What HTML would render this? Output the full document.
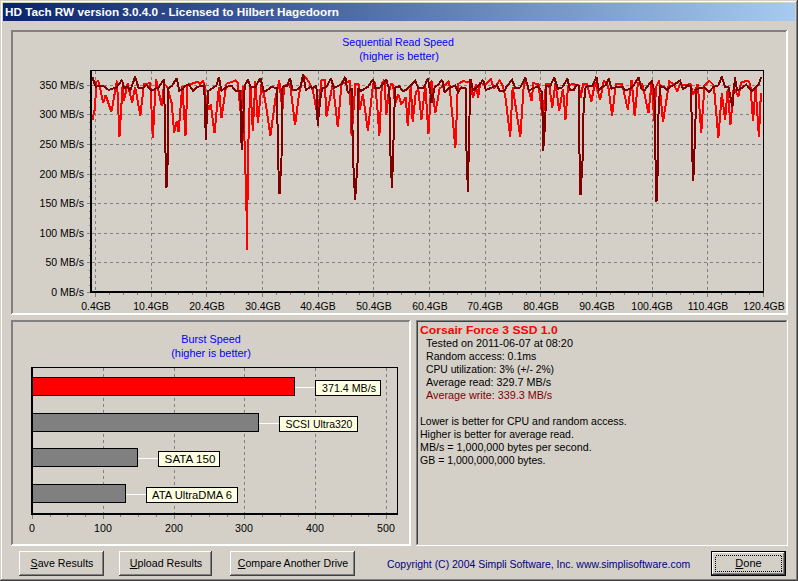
<!DOCTYPE html>
<html><head><meta charset="utf-8"><style>
html,body{margin:0;padding:0;}
body{width:798px;height:581px;background:#d4d0c8;position:relative;overflow:hidden;font-family:"Liberation Sans", sans-serif;}
.t{position:absolute;white-space:pre;line-height:13px;}
svg{position:absolute;left:0;top:0;}
u{text-decoration:underline;}
</style></head><body>
<div style="position:absolute;left:3px;top:3px;width:792px;height:18px;background:linear-gradient(to right,#0a246a,#a6caf0);"></div>
<svg width="798" height="581" viewBox="0 0 798 581" shape-rendering="crispEdges">
<rect x="0" y="0" width="798" height="1" fill="#d4d0c8"/>
<rect x="0" y="0" width="1" height="581" fill="#d4d0c8"/>
<rect x="1" y="1" width="796" height="1" fill="#ffffff"/>
<rect x="1" y="1" width="1" height="579" fill="#ffffff"/>
<rect x="0" y="580" width="798" height="1" fill="#404040"/>
<rect x="797" y="0" width="1" height="581" fill="#404040"/>
<rect x="1" y="579" width="796" height="1" fill="#808080"/>
<rect x="796" y="1" width="1" height="579" fill="#808080"/>
<rect x="11" y="30" width="776" height="1" fill="#808080"/>
<rect x="11" y="30" width="1" height="284" fill="#808080"/>
<rect x="11" y="314" width="777" height="1" fill="#ffffff"/>
<rect x="787" y="30" width="1" height="285" fill="#ffffff"/>
<rect x="12" y="31" width="774" height="1" fill="#808080"/>
<rect x="12" y="31" width="1" height="282" fill="#808080"/>
<rect x="12" y="313" width="775" height="1" fill="#ffffff"/>
<rect x="786" y="31" width="1" height="283" fill="#ffffff"/>
<rect x="11" y="320" width="399" height="1" fill="#808080"/>
<rect x="11" y="320" width="1" height="225" fill="#808080"/>
<rect x="11" y="545" width="400" height="1" fill="#ffffff"/>
<rect x="410" y="320" width="1" height="226" fill="#ffffff"/>
<rect x="12" y="321" width="397" height="1" fill="#808080"/>
<rect x="12" y="321" width="1" height="223" fill="#808080"/>
<rect x="12" y="544" width="398" height="1" fill="#ffffff"/>
<rect x="409" y="321" width="1" height="224" fill="#ffffff"/>
<rect x="416" y="320" width="372" height="1" fill="#808080"/>
<rect x="416" y="320" width="1" height="226" fill="#808080"/>
<rect x="416" y="545" width="372" height="1" fill="#ffffff"/>
<rect x="787" y="320" width="1" height="226" fill="#ffffff"/>
<rect x="417" y="321" width="370" height="1" fill="#404040"/>
<rect x="417" y="321" width="1" height="224" fill="#404040"/>
<rect x="417" y="544" width="370" height="1" fill="#d4d0c8"/>
<rect x="786" y="321" width="1" height="224" fill="#d4d0c8"/>
<path d="M95.5 71V291 M151.5 71V291 M206.5 71V291 M262.5 71V291 M318.5 71V291 M373.5 71V291 M429.5 71V291 M485.5 71V291 M540.5 71V291 M596.5 71V291 M652.5 71V291 M707.5 71V291 M92 262.5H763 M92 233.5H763 M92 203.5H763 M92 174.5H763 M92 144.5H763 M92 114.5H763 M92 85.5H763" stroke="#808080" stroke-width="1" stroke-dasharray="3 3" fill="none"/>
<rect x="90" y="70" width="674" height="1" fill="#000"/>
<rect x="90" y="70" width="2" height="223" fill="#000"/>
<rect x="763" y="70" width="1" height="223" fill="#000"/>
<rect x="90" y="291" width="674" height="2" fill="#000"/>
<path d="M87 292.5H90 M89 285.5H90 M89 277.5H90 M89 270.5H90 M87 262.5H90 M89 255.5H90 M89 248.5H90 M89 240.5H90 M87 233.5H90 M89 225.5H90 M89 218.5H90 M89 211.5H90 M87 203.5H90 M89 196.5H90 M89 188.5H90 M89 181.5H90 M87 174.5H90 M89 166.5H90 M89 159.5H90 M89 151.5H90 M87 144.5H90 M89 137.5H90 M89 129.5H90 M89 122.5H90 M87 114.5H90 M89 107.5H90 M89 100.5H90 M89 92.5H90 M87 85.5H90 M95.5 293V297 M109.5 293V295 M123.5 293V295 M137.5 293V295 M151.5 293V297 M165.5 293V295 M178.5 293V295 M192.5 293V295 M206.5 293V297 M220.5 293V295 M234.5 293V295 M248.5 293V295 M262.5 293V297 M276.5 293V295 M290.5 293V295 M304.5 293V295 M318.5 293V297 M332.5 293V295 M346.5 293V295 M359.5 293V295 M373.5 293V297 M387.5 293V295 M401.5 293V295 M415.5 293V295 M429.5 293V297 M443.5 293V295 M457.5 293V295 M471.5 293V295 M485.5 293V297 M499.5 293V295 M512.5 293V295 M526.5 293V295 M540.5 293V297 M554.5 293V295 M568.5 293V295 M582.5 293V295 M596.5 293V297 M610.5 293V295 M624.5 293V295 M638.5 293V295 M652.5 293V297 M666.5 293V295 M680.5 293V295 M693.5 293V295 M707.5 293V297 M721.5 293V295 M735.5 293V295 M749.5 293V295 M763.5 293V297" stroke="#808080" stroke-width="1" fill="none"/>
<path d="M92.5 120.1 L95.0 108.2 L96.3 81.8 L98.2 81.2 L100.1 88.1 L103.2 103.2 L105.7 95.0 L111.4 112.0 L117.0 80.6 L119.5 136.5 L122.7 84.3 L123.9 100.7 L127.7 83.7 L132.1 102.5 L135.2 86.8 L140.3 115.7 L144.0 84.3 L150.3 83.1 L152.8 137.7 L156.0 78.7 L161.6 105.7 L164.1 83.7 L167.3 86.8 L171.7 103.2 L174.2 132.7 L176.7 120.8 L178.6 132.1 L182.3 85.6 L185.5 135.8 L187.4 85.6 L190.0 84.3 L197.6 81.8 L200.1 84.3 L203.2 80.6 L204.5 85.0 L205.7 99.4 L208.9 109.5 L210.8 104.4 L214.5 133.3 L218.9 86.8 L221.4 118.3 L226.5 83.7 L235.3 80.6 L237.8 83.1 L240.9 114.5 L242.8 85.6 L246.2 196.0 L247.4 250.0 L247.6 167.0 L250.3 84.3 L252.8 130.8 L255.4 80.6 L257.9 123.3 L261.6 83.1 L265.4 101.9 L270.4 135.8 L275.5 98.2 L279.2 80.6 L282.4 110.7 L284.2 85.6 L290.1 84.3 L295.1 125.2 L298.8 95.6 L303.2 75.5 L306.4 78.1 L310.2 84.3 L312.7 90.0 L317.7 115.7 L321.5 79.9 L324.6 79.9 L326.5 116.4 L332.8 83.7 L337.8 127.0 L341.6 82.4 L345.3 83.7 L349.7 80.6 L351.6 135.8 L355.4 84.3 L358.5 83.7 L359.8 109.5 L362.9 94.4 L367.9 130.8 L373.0 84.3 L375.0 83.1 L377.5 109.5 L379.4 135.8 L381.9 83.1 L384.4 79.9 L386.3 114.5 L388.8 91.9 L391.3 83.1 L393.2 85.6 L395.1 104.4 L398.2 93.8 L401.4 104.4 L405.8 96.9 L407.7 125.8 L410.8 85.0 L412.7 122.0 L415.8 92.5 L418.3 89.4 L421.5 119.5 L425.3 85.0 L428.4 134.0 L431.5 80.6 L435.3 113.2 L439.7 88.1 L443.5 86.2 L449.1 81.2 L455.4 148.0 L457.9 84.3 L462.9 81.2 L470.5 82.4 L473.0 98.2 L474.9 90.6 L475.7 84.3 L478.2 97.5 L480.1 83.1 L485.7 84.3 L490.7 78.7 L493.9 88.7 L499.5 80.6 L502.7 85.6 L505.2 95.6 L510.2 137.1 L512.7 86.8 L520.3 137.1 L524.0 81.8 L527.2 84.3 L531.6 101.3 L533.4 83.1 L538.5 84.3 L540.4 100.7 L542.9 118.3 L546.0 83.7 L549.1 84.3 L552.3 108.2 L555.4 83.1 L559.2 110.7 L563.0 88.7 L565.5 119.5 L568.0 86.8 L571.9 83.7 L578.8 85.6 L580.7 97.5 L583.2 83.7 L587.0 84.3 L591.4 101.3 L595.2 81.8 L600.2 100.0 L603.9 80.6 L608.3 86.8 L612.1 115.7 L615.9 83.7 L622.2 84.3 L627.8 109.5 L631.6 79.9 L634.7 115.7 L637.9 83.1 L642.3 83.7 L648.5 113.2 L651.7 81.8 L654.2 120.8 L656.1 86.8 L659.2 80.6 L663.0 122.0 L667.3 94.6 L669.3 81.3 L673.3 83.9 L677.3 91.2 L679.9 83.9 L683.9 85.3 L690.5 83.9 L693.2 94.6 L697.8 83.9 L701.2 133.1 L704.5 85.3 L709.1 80.6 L713.8 85.3 L718.4 137.7 L721.8 93.2 L725.1 119.8 L727.7 89.2 L730.4 125.1 L733.7 87.9 L738.4 96.6 L741.0 82.6 L747.6 80.6 L750.3 83.9 L753.0 121.1 L755.6 87.9 L758.9 137.1 L760.9 93.2" stroke="#ff0000" stroke-width="2" fill="none" stroke-linejoin="miter" stroke-miterlimit="2"/>
<path d="M92.5 77.4 L95.7 86.8 L102.6 85.6 L108.8 90.0 L116.4 87.5 L122.0 79.9 L123.9 88.1 L127.7 86.8 L130.2 90.6 L135.2 76.8 L138.4 87.5 L142.8 88.1 L146.5 85.0 L151.6 90.6 L158.5 87.5 L164.1 79.3 L165.0 134.0 L166.5 188.0 L168.0 154.0 L168.5 88.1 L171.7 86.2 L176.7 78.1 L179.2 90.6 L183.0 88.7 L185.5 85.6 L188.8 84.3 L193.2 91.2 L196.9 86.8 L203.8 85.6 L205.1 101.9 L205.7 139.5 L208.2 91.2 L216.4 85.6 L218.9 76.8 L221.4 90.6 L226.5 86.8 L231.5 85.6 L235.3 90.6 L240.3 91.2 L241.7 150.2 L244.7 85.6 L247.8 79.9 L251.0 87.5 L255.4 86.8 L260.4 78.1 L263.5 90.6 L266.7 90.6 L271.7 86.8 L275.5 88.1 L277.0 88.0 L278.0 158.0 L279.5 194.0 L281.5 158.0 L282.5 88.0 L283.8 85.6 L286.9 86.2 L290.1 78.1 L292.6 90.0 L297.6 89.4 L300.7 86.2 L303.2 73.7 L305.8 90.0 L310.2 86.8 L312.7 88.1 L316.4 85.6 L317.7 125.8 L320.2 99.4 L322.1 88.7 L326.5 86.8 L330.9 78.7 L334.0 88.1 L341.6 84.3 L345.3 76.8 L347.8 93.1 L351.6 88.1 L353.2 161.8 L355.1 199.8 L357.6 161.8 L358.5 88.1 L360.4 91.2 L367.9 86.8 L373.0 79.3 L375.5 88.7 L379.9 87.5 L380.0 87.5 L386.3 79.9 L389.4 90.0 L390.5 155.7 L392.0 188.2 L393.6 137.8 L395.1 87.5 L399.5 86.2 L402.6 91.2 L405.8 90.0 L410.2 86.2 L415.2 80.6 L418.3 88.1 L424.0 87.5 L427.8 78.1 L430.3 91.9 L431.5 103.2 L434.7 86.8 L437.8 85.0 L442.2 79.9 L444.7 92.5 L449.1 88.1 L455.4 85.6 L457.9 91.9 L461.7 87.5 L465.5 88.1 L466.6 156.9 L468.0 192.0 L469.0 135.0 L470.5 78.7 L473.0 90.6 L473.0 90.6 L477.5 86.8 L483.2 79.9 L485.7 90.0 L490.7 88.1 L497.0 85.0 L499.5 90.6 L504.5 91.2 L506.4 86.8 L512.1 79.9 L515.2 88.1 L520.3 87.5 L525.3 77.4 L529.0 90.6 L534.1 88.1 L537.8 86.2 L542.2 92.5 L543.2 151.0 L545.4 118.3 L546.0 85.6 L550.4 85.6 L554.2 77.4 L557.9 88.7 L562.3 87.5 L567.4 78.7 L570.0 90.0 L573.8 90.0 L576.3 85.0 L578.6 85.6 L579.2 140.0 L580.5 195.1 L583.0 153.1 L583.6 105.7 L585.7 86.8 L588.2 86.2 L592.6 85.6 L596.4 76.8 L598.9 90.0 L602.7 86.8 L605.8 85.0 L609.0 78.7 L611.5 88.7 L615.3 87.5 L622.2 86.8 L625.3 90.0 L629.1 89.4 L633.5 85.6 L638.5 77.4 L641.6 89.4 L644.8 90.0 L651.7 80.6 L654.4 91.9 L655.2 146.0 L656.5 201.8 L658.0 163.5 L658.6 105.7 L660.5 86.2 L664.0 87.3 L667.3 89.9 L670.0 86.6 L673.3 85.3 L679.9 80.6 L683.2 89.2 L687.9 85.3 L691.2 86.6 L692.0 149.9 L693.3 180.5 L694.5 149.9 L696.5 89.2 L701.2 87.9 L704.5 87.3 L709.1 91.9 L713.1 87.3 L718.4 85.3 L721.8 76.6 L725.1 86.6 L728.4 86.6 L732.4 107.2 L735.0 77.3 L737.0 90.6 L741.7 87.9 L746.3 84.6 L751.6 91.2 L756.3 86.6 L758.9 84.6 L760.9 77.3" stroke="#800000" stroke-width="2" fill="none" stroke-linejoin="miter" stroke-miterlimit="2"/>
<path d="M103.5 368V513 M174.5 368V513 M244.5 368V513 M315.5 368V513 M386.5 368V513" stroke="#808080" stroke-width="1" stroke-dasharray="3 3" fill="none"/>
<rect x="31" y="367" width="367" height="1" fill="#000"/>
<rect x="31" y="367" width="2" height="148" fill="#000"/>
<rect x="397" y="367" width="1" height="148" fill="#000"/>
<rect x="31" y="513" width="367" height="2" fill="#000"/>
<path d="M32.5 515V519 M50.5 515V517 M67.5 515V517 M85.5 515V517 M103.5 515V519 M120.5 515V517 M138.5 515V517 M156.5 515V517 M174.5 515V519 M191.5 515V517 M209.5 515V517 M227.5 515V517 M244.5 515V519 M262.5 515V517 M280.5 515V517 M298.5 515V517 M315.5 515V519 M333.5 515V517 M351.5 515V517 M368.5 515V517 M386.5 515V519" stroke="#808080" stroke-width="1" fill="none"/>
<rect x="33" y="377" width="262" height="19" fill="#000"/>
<rect x="33" y="378" width="261" height="17" fill="#ff0000"/>
<rect x="295" y="387" width="20" height="1" fill="#ffffff"/>
<rect x="315" y="380" width="66" height="16" fill="#000"/>
<rect x="316" y="381" width="64" height="14" fill="#ffffe1"/>
<rect x="33" y="413" width="226" height="19" fill="#000"/>
<rect x="33" y="414" width="225" height="17" fill="#808080"/>
<rect x="259" y="423" width="20" height="1" fill="#ffffff"/>
<rect x="279" y="416" width="79" height="16" fill="#000"/>
<rect x="280" y="417" width="77" height="14" fill="#ffffe1"/>
<rect x="33" y="448" width="105" height="19" fill="#000"/>
<rect x="33" y="449" width="104" height="17" fill="#808080"/>
<rect x="138" y="458" width="20" height="1" fill="#ffffff"/>
<rect x="158" y="451" width="62" height="16" fill="#000"/>
<rect x="159" y="452" width="60" height="14" fill="#ffffe1"/>
<rect x="33" y="484" width="93" height="19" fill="#000"/>
<rect x="33" y="485" width="92" height="17" fill="#808080"/>
<rect x="126" y="494" width="20" height="1" fill="#ffffff"/>
<rect x="146" y="487" width="92" height="16" fill="#000"/>
<rect x="147" y="488" width="90" height="14" fill="#ffffe1"/>
<rect x="19" y="551" width="85" height="25" fill="#404040"/>
<rect x="19" y="551" width="84" height="24" fill="#ffffff"/>
<rect x="20" y="552" width="83" height="23" fill="#808080"/>
<rect x="20" y="552" width="82" height="22" fill="#d4d0c8"/>
<rect x="119" y="551" width="93" height="25" fill="#404040"/>
<rect x="119" y="551" width="92" height="24" fill="#ffffff"/>
<rect x="120" y="552" width="91" height="23" fill="#808080"/>
<rect x="120" y="552" width="90" height="22" fill="#d4d0c8"/>
<rect x="230" y="551" width="125" height="25" fill="#404040"/>
<rect x="230" y="551" width="124" height="24" fill="#ffffff"/>
<rect x="231" y="552" width="123" height="23" fill="#808080"/>
<rect x="231" y="552" width="122" height="22" fill="#d4d0c8"/>
<rect x="711" y="551" width="75" height="25" fill="#000"/>
<rect x="712" y="552" width="73" height="23" fill="#404040"/>
<rect x="712" y="552" width="72" height="22" fill="#ffffff"/>
<rect x="713" y="553" width="71" height="21" fill="#808080"/>
<rect x="713" y="553" width="70" height="20" fill="#d4d0c8"/>
<rect x="715.5" y="555.5" width="66" height="16" fill="none" stroke="#000" stroke-width="1" stroke-dasharray="1 1"/>
</svg>
<div class="t" style="left:83.60px;top:285.69px;color:#000;font-size:11px;font-weight:normal;transform-origin:right 50%;transform:translateX(-100%) scaleX(0.955);">0 MB/s</div>
<div class="t" style="left:83.60px;top:255.69px;color:#000;font-size:11px;font-weight:normal;transform-origin:right 50%;transform:translateX(-100%) scaleX(0.955);">50 MB/s</div>
<div class="t" style="left:83.60px;top:226.69px;color:#000;font-size:11px;font-weight:normal;transform-origin:right 50%;transform:translateX(-100%) scaleX(0.955);">100 MB/s</div>
<div class="t" style="left:83.60px;top:196.69px;color:#000;font-size:11px;font-weight:normal;transform-origin:right 50%;transform:translateX(-100%) scaleX(0.955);">150 MB/s</div>
<div class="t" style="left:83.60px;top:167.69px;color:#000;font-size:11px;font-weight:normal;transform-origin:right 50%;transform:translateX(-100%) scaleX(0.955);">200 MB/s</div>
<div class="t" style="left:83.60px;top:137.69px;color:#000;font-size:11px;font-weight:normal;transform-origin:right 50%;transform:translateX(-100%) scaleX(0.955);">250 MB/s</div>
<div class="t" style="left:83.60px;top:107.69px;color:#000;font-size:11px;font-weight:normal;transform-origin:right 50%;transform:translateX(-100%) scaleX(0.955);">300 MB/s</div>
<div class="t" style="left:83.60px;top:78.69px;color:#000;font-size:11px;font-weight:normal;transform-origin:right 50%;transform:translateX(-100%) scaleX(0.955);">350 MB/s</div>
<div class="t" style="left:95.50px;top:300.19px;color:#000;font-size:11px;font-weight:normal;transform-origin:center 50%;transform:translateX(-50%) scaleX(0.95);">0.4GB</div>
<div class="t" style="left:151.17px;top:300.19px;color:#000;font-size:11px;font-weight:normal;transform-origin:center 50%;transform:translateX(-50%) scaleX(0.95);">10.4GB</div>
<div class="t" style="left:206.83px;top:300.19px;color:#000;font-size:11px;font-weight:normal;transform-origin:center 50%;transform:translateX(-50%) scaleX(0.95);">20.4GB</div>
<div class="t" style="left:262.50px;top:300.19px;color:#000;font-size:11px;font-weight:normal;transform-origin:center 50%;transform:translateX(-50%) scaleX(0.95);">30.4GB</div>
<div class="t" style="left:318.17px;top:300.19px;color:#000;font-size:11px;font-weight:normal;transform-origin:center 50%;transform:translateX(-50%) scaleX(0.95);">40.4GB</div>
<div class="t" style="left:373.83px;top:300.19px;color:#000;font-size:11px;font-weight:normal;transform-origin:center 50%;transform:translateX(-50%) scaleX(0.95);">50.4GB</div>
<div class="t" style="left:429.50px;top:300.19px;color:#000;font-size:11px;font-weight:normal;transform-origin:center 50%;transform:translateX(-50%) scaleX(0.95);">60.4GB</div>
<div class="t" style="left:485.17px;top:300.19px;color:#000;font-size:11px;font-weight:normal;transform-origin:center 50%;transform:translateX(-50%) scaleX(0.95);">70.4GB</div>
<div class="t" style="left:540.83px;top:300.19px;color:#000;font-size:11px;font-weight:normal;transform-origin:center 50%;transform:translateX(-50%) scaleX(0.95);">80.4GB</div>
<div class="t" style="left:596.50px;top:300.19px;color:#000;font-size:11px;font-weight:normal;transform-origin:center 50%;transform:translateX(-50%) scaleX(0.95);">90.4GB</div>
<div class="t" style="left:652.17px;top:300.19px;color:#000;font-size:11px;font-weight:normal;transform-origin:center 50%;transform:translateX(-50%) scaleX(0.95);">100.4GB</div>
<div class="t" style="left:707.83px;top:300.19px;color:#000;font-size:11px;font-weight:normal;transform-origin:center 50%;transform:translateX(-50%) scaleX(0.95);">110.4GB</div>
<div class="t" style="left:763.50px;top:300.19px;color:#000;font-size:11px;font-weight:normal;transform-origin:center 50%;transform:translateX(-50%) scaleX(0.95);">120.4GB</div>
<div class="t" style="left:398.30px;top:35.69px;color:#0000ff;font-size:11px;font-weight:normal;transform-origin:center 50%;transform:translateX(-50%) scaleX(0.96);">Sequential Read Speed</div>
<div class="t" style="left:398.70px;top:49.99px;color:#0000ff;font-size:11px;font-weight:normal;transform-origin:center 50%;transform:translateX(-50%) scaleX(0.995);">(higher is better)</div>
<div class="t" style="left:349.20px;top:381.69px;color:#000;font-size:11px;font-weight:normal;transform-origin:center 50%;transform:translateX(-50%) scaleX(0.97);">371.4 MB/s</div>
<div class="t" style="left:319.00px;top:417.69px;color:#000;font-size:11px;font-weight:normal;transform-origin:center 50%;transform:translateX(-50%) scaleX(0.95);">SCSI Ultra320</div>
<div class="t" style="left:189.90px;top:452.69px;color:#000;font-size:11px;font-weight:normal;transform-origin:center 50%;transform:translateX(-50%) scaleX(1.06);">SATA 150</div>
<div class="t" style="left:191.80px;top:488.69px;color:#000;font-size:11px;font-weight:normal;transform-origin:center 50%;transform:translateX(-50%) scaleX(1.02);">ATA UltraDMA 6</div>
<div class="t" style="left:32.00px;top:521.69px;color:#000;font-size:11px;font-weight:normal;transform-origin:center 50%;transform:translateX(-50%) scaleX(0.97);">0</div>
<div class="t" style="left:102.80px;top:521.69px;color:#000;font-size:11px;font-weight:normal;transform-origin:center 50%;transform:translateX(-50%) scaleX(0.97);">100</div>
<div class="t" style="left:173.60px;top:521.69px;color:#000;font-size:11px;font-weight:normal;transform-origin:center 50%;transform:translateX(-50%) scaleX(0.97);">200</div>
<div class="t" style="left:244.40px;top:521.69px;color:#000;font-size:11px;font-weight:normal;transform-origin:center 50%;transform:translateX(-50%) scaleX(0.97);">300</div>
<div class="t" style="left:315.20px;top:521.69px;color:#000;font-size:11px;font-weight:normal;transform-origin:center 50%;transform:translateX(-50%) scaleX(0.97);">400</div>
<div class="t" style="left:386.00px;top:521.69px;color:#000;font-size:11px;font-weight:normal;transform-origin:center 50%;transform:translateX(-50%) scaleX(0.97);">500</div>
<div class="t" style="left:211.00px;top:332.69px;color:#0000ff;font-size:11px;font-weight:normal;transform-origin:center 50%;transform:translateX(-50%) scaleX(0.98);">Burst Speed</div>
<div class="t" style="left:210.80px;top:346.99px;color:#0000ff;font-size:11px;font-weight:normal;transform-origin:center 50%;transform:translateX(-50%) scaleX(0.995);">(higher is better)</div>
<div class="t" style="left:420.00px;top:323.69px;color:#ff0000;font-size:11px;font-weight:bold;transform-origin:left 50%;transform:scaleX(1.104);">Corsair Force 3 SSD 1.0</div>
<div class="t" style="left:426.00px;top:336.69px;color:#000;font-size:11px;font-weight:normal;transform-origin:left 50%;transform:scaleX(0.986);">Tested on 2011-06-07 at 08:20</div>
<div class="t" style="left:426.00px;top:349.69px;color:#000;font-size:11px;font-weight:normal;transform-origin:left 50%;transform:scaleX(0.96);">Random access: 0.1ms</div>
<div class="t" style="left:426.00px;top:362.69px;color:#000;font-size:11px;font-weight:normal;transform-origin:left 50%;transform:scaleX(0.937);">CPU utilization: 3% (+/- 2%)</div>
<div class="t" style="left:426.00px;top:375.69px;color:#000;font-size:11px;font-weight:normal;transform-origin:left 50%;transform:scaleX(0.98);">Average read: 329.7 MB/s</div>
<div class="t" style="left:426.00px;top:388.69px;color:#800000;font-size:11px;font-weight:normal;transform-origin:left 50%;transform:scaleX(0.98);">Average write: 339.3 MB/s</div>
<div class="t" style="left:420.00px;top:414.69px;color:#000;font-size:11px;font-weight:normal;transform-origin:left 50%;transform:scaleX(0.955);">Lower is better for CPU and random access.</div>
<div class="t" style="left:420.00px;top:427.69px;color:#000;font-size:11px;font-weight:normal;transform-origin:left 50%;transform:scaleX(0.953);">Higher is better for average read.</div>
<div class="t" style="left:420.00px;top:440.69px;color:#000;font-size:11px;font-weight:normal;transform-origin:left 50%;transform:scaleX(0.973);">MB/s = 1,000,000 bytes per second.</div>
<div class="t" style="left:420.00px;top:453.69px;color:#000;font-size:11px;font-weight:normal;transform-origin:left 50%;transform:scaleX(0.957);">GB = 1,000,000,000 bytes.</div>
<div class="t" style="left:61.50px;top:556.69px;color:#000;font-size:11px;font-weight:normal;transform-origin:center 50%;transform:translateX(-50%) scaleX(0.97);"><u>S</u>ave Results</div>
<div class="t" style="left:165.50px;top:556.69px;color:#000;font-size:11px;font-weight:normal;transform-origin:center 50%;transform:translateX(-50%) scaleX(0.97);"><u>U</u>pload Results</div>
<div class="t" style="left:292.50px;top:556.69px;color:#000;font-size:11px;font-weight:normal;transform-origin:center 50%;transform:translateX(-50%) scaleX(0.96);"><u>C</u>ompare Another Drive</div>
<div class="t" style="left:748.50px;top:556.69px;color:#000;font-size:11px;font-weight:normal;transform-origin:center 50%;transform:translateX(-50%) scaleX(1.0);"><u>D</u>one</div>
<div class="t" style="left:387.00px;top:558.19px;color:#000080;font-size:11px;font-weight:normal;transform-origin:left 50%;transform:scaleX(0.95);">Copyright (C) 2004 Simpli Software, Inc. www.simplisoftware.com</div>
<div class="t" style="left:5.00px;top:5.69px;color:#fff;font-size:11px;font-weight:bold;transform-origin:left 50%;transform:scaleX(1.064);">HD Tach RW version 3.0.4.0 - Licensed to Hilbert Hagedoorn</div>
</body></html>
